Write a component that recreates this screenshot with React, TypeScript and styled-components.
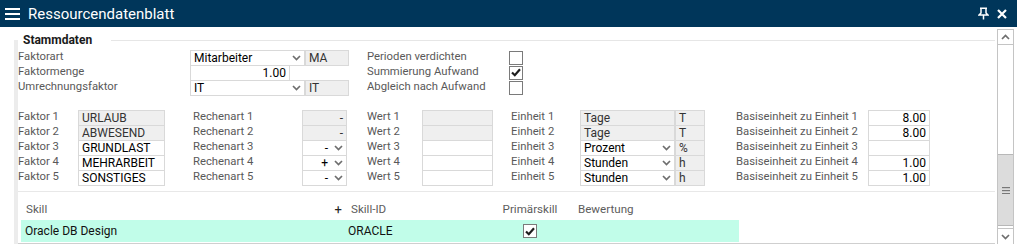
import styled, { createGlobalStyle } from "styled-components";

const GlobalStyle = createGlobalStyle`
  html, body {
    margin: 0;
    padding: 0;
    background: #fff;
  }
  body {
    font-family: Roboto, "Liberation Sans", Arial, sans-serif;
  }
`;

const Window = styled.div`
  width: 1017px;
  height: 244px;
  display: flex;
  flex-direction: column;
  overflow: hidden;
  background: #fff;
`;

const TitleBar = styled.div`
  height: 27px;
  flex: none;
  background: #00365a;
  color: #fff;
  display: flex;
  align-items: center;
  padding: 0 6px 0 5px;
`;

const Title = styled.div`
  flex: 1;
  margin-left: 8px;
  font-size: 15px;
  line-height: 18px;
`;

const TitleIcon = styled.div`
  width: 18px;
  height: 18px;
  display: flex;
  align-items: center;
  justify-content: center;
  margin-left: 1px;
`;

const Body = styled.div`
  flex: 1;
  display: flex;
  min-height: 0;
`;

const Main = styled.div`
  flex: 1;
  display: flex;
  flex-direction: column;
  padding: 13px 2px 0 14px;
  min-width: 0;
`;

const Frame = styled.div`
  flex: 1;
  display: flex;
  flex-direction: column;
  border-left: 4px solid #ececec;
`;

const LegendRow = styled.div`
  display: flex;
  align-items: center;
  height: 12px;
  margin-top: -6px;
`;

const Legend = styled.div`
  width: 88px;
  padding-left: 5px;
  font-size: 12px;
  font-weight: 700;
  color: #1a1a1a;
`;

const LegendLine = styled.div`
  flex: 1;
  border-top: 1px solid #e6e6e6;
`;

const TopGrid = styled.div`
  display: grid;
  grid-template-columns: 172px 115px 44px 160px 14px;
  grid-auto-rows: 15px;
  margin-top: 4px;
`;

const FactorGrid = styled.div`
  display: grid;
  grid-template-columns: 60px 87px 137px 45px 75px 71px 87px 95px 30px 163px 62px;
  grid-auto-rows: 15px;
  margin-top: 15px;
`;

const Label = styled.div<{ $indent?: number }>`
  font-size: 11.3px;
  line-height: 13px;
  color: #595959;
  white-space: nowrap;
  padding-left: ${(p) => p.$indent ?? 0}px;
`;

const Field = styled.div<{ $disabled?: boolean; $width?: number }>`
  box-sizing: border-box;
  height: 16px;
  ${(p) => (p.$width ? `width: ${p.$width}px;` : "")}
  border: 1px solid #d9d9d9;
  background: ${(p) => (p.$disabled ? "#efefef" : "#fff")};
  color: ${(p) => (p.$disabled ? "#333" : "#000")};
  font-size: 12px;
  line-height: 14px;
  padding: 0 3px;
  white-space: nowrap;
  overflow: hidden;
  display: flex;
  align-items: center;
  gap: 6px;
`;

const Value = styled.span<{ $align?: string }>`
  flex: 1;
  text-align: ${(p) => p.$align ?? "left"};
`;

const CheckCell = styled.div`
  display: flex;
  align-items: center;
  justify-content: center;
`;

const Box = styled.span`
  box-sizing: border-box;
  width: 14px;
  height: 14px;
  border: 1px solid #7a7a7a;
  background: #fff;
  display: flex;
  align-items: center;
  justify-content: center;
`;

const Divider = styled.div`
  margin-top: 6px;
  border-top: 1px solid #e8e8e8;
`;

const SkillTable = styled.div`
  margin: 6px 0 0 3px;
  width: 718px;
`;

const SkillRow = styled.div<{ $head?: boolean }>`
  display: grid;
  grid-template-columns: 324px 145px 80px 169px;
  height: 22px;
  align-items: center;
  font-size: ${(p) => (p.$head ? "11.6px" : "12px")};
  color: ${(p) => (p.$head ? "#5c5c5c" : "#111")};
  background: ${(p) => (p.$head ? "transparent" : "#c1fde9")};
`;

const SkillCell = styled.div<{ $pad?: number; $center?: boolean }>`
  padding-left: ${(p) => p.$pad ?? 0}px;
  display: flex;
  align-items: center;
  justify-content: ${(p) => (p.$center ? "center" : "flex-start")};
  white-space: nowrap;
`;

const Plus = styled.span`
  margin-left: auto;
  margin-right: 3px;
  color: #222;
  font-size: 13px;
`;

const BottomLine = styled.div`
  margin-top: auto;
  border-top: 1px solid #cfcfcf;
`;

const Scrollbar = styled.div`
  width: 17px;
  box-sizing: border-box;
  margin: 2px 3px 0 0;
  border-left: 1px solid #c4c4c4;
  border-right: 1px solid #c4c4c4;
  display: flex;
  flex-direction: column;
`;

const ScrollButton = styled.div<{ $top?: boolean }>`
  height: 16px;
  flex: none;
  box-sizing: border-box;
  ${(p) => (p.$top ? "border-top: 1px solid #c4c4c4; border-bottom: 1px solid #c4c4c4;" : "border-top: 1px solid #c4c4c4;")}
  display: flex;
  align-items: center;
  justify-content: center;
`;

const Track = styled.div`
  flex: 1;
  display: flex;
  flex-direction: column;
  padding-top: 109px;
`;

const Thumb = styled.div`
  height: 70px;
  background: #dcdcdc;
  border-top: 1px solid #b8b8b8;
  border-bottom: 1px solid #b8b8b8;
  display: flex;
  align-items: center;
  justify-content: center;
`;

const Chevron = ({ up }: { up?: boolean }) => (
  <svg width="9" height="6" viewBox="0 0 9 6" style={{ flex: "none" }}>
    <polyline
      points={up ? "1,5 4.5,1.5 8,5" : "1,1 4.5,4.5 8,1"}
      fill="none"
      stroke="#6e6e6e"
      strokeWidth="1.7"
    />
  </svg>
);

const Check = () => (
  <svg width="10" height="9" viewBox="0 0 10 9">
    <polyline points="1,4.5 3.8,7.2 9,1.2" fill="none" stroke="#1e1e1e" strokeWidth="2.2" />
  </svg>
);

const Checkbox = ({ checked }: { checked?: boolean }) => (
  <CheckCell>
    <Box>{checked && <Check />}</Box>
  </CheckCell>
);

const Select = ({ value, align, width }: { value: string; align?: string; width?: number }) => (
  <Field $width={width}>
    <Value $align={align}>{value}</Value>
    <Chevron />
  </Field>
);

const factors = [
  { name: "URLAUB", locked: true, op: "-", unit: "Tage", short: "T", base: "8.00" },
  { name: "ABWESEND", locked: true, op: "-", unit: "Tage", short: "T", base: "8.00" },
  { name: "GRUNDLAST", locked: false, op: "-", unit: "Prozent", short: "%", base: "" },
  { name: "MEHRARBEIT", locked: false, op: "+", unit: "Stunden", short: "h", base: "1.00" },
  { name: "SONSTIGES", locked: false, op: "-", unit: "Stunden", short: "h", base: "1.00" },
];

export default function App() {
  return (
    <>
      <GlobalStyle />
      <Window>
        <TitleBar>
          <svg width="15" height="14" viewBox="0 0 15 14">
            <rect x="0" y="1" width="15" height="2" fill="#fff" />
            <rect x="0" y="6" width="15" height="2" fill="#fff" />
            <rect x="0" y="11" width="15" height="2" fill="#fff" />
          </svg>
          <Title>Ressourcendatenblatt</Title>
          <TitleIcon>
            <svg width="11" height="13" viewBox="0 0 11 13">
              <path d="M2 1.2 H9 M3 1.2 V6 L1 8 H10 L8 6 V1.2 M5.5 8 V12.5" fill="none" stroke="#fff" strokeWidth="1.5" />
            </svg>
          </TitleIcon>
          <TitleIcon>
            <svg width="10" height="10" viewBox="0 0 10 10">
              <path d="M1 1 L9 9 M9 1 L1 9" stroke="#fff" strokeWidth="2.2" />
            </svg>
          </TitleIcon>
        </TitleBar>
        <Body>
          <Main>
            <Frame>
              <LegendRow>
                <Legend>Stammdaten</Legend>
                <LegendLine />
              </LegendRow>
              <TopGrid>
                <Label>Faktorart</Label>
                <Select value="Mitarbeiter" />
                <Field $disabled>MA</Field>
                <Label $indent={18}>Perioden verdichten</Label>
                <Checkbox />

                <Label>Faktormenge</Label>
                <Field $width={100}>
                  <Value $align="right">1.00</Value>
                </Field>
                <div />
                <Label $indent={18}>Summierung Aufwand</Label>
                <Checkbox checked />

                <Label>Umrechnungsfaktor</Label>
                <Select value="IT" />
                <Field $disabled>IT</Field>
                <Label $indent={18}>Abgleich nach Aufwand</Label>
                <Checkbox />
              </TopGrid>

              <FactorGrid>
                {factors.map((f, i) => (
                  <>
                    <Label key={`l${i}`}>Faktor {i + 1}</Label>
                    <Field $disabled={f.locked}>{f.name}</Field>
                    <Label $indent={28}>Rechenart {i + 1}</Label>
                    {f.locked ? (
                      <Field $disabled>
                        <Value $align="right">{f.op}</Value>
                      </Field>
                    ) : (
                      <Select value={f.op} align="right" />
                    )}
                    <Label $indent={20}>Wert {i + 1}</Label>
                    <Field $disabled={f.locked} />
                    <Label $indent={18}>Einheit {i + 1}</Label>
                    {f.locked ? <Field $disabled>{f.unit}</Field> : <Select value={f.unit} />}
                    <Field $disabled>{f.short}</Field>
                    <Label $indent={31}>Basiseinheit zu Einheit {i + 1}</Label>
                    <Field>
                      <Value $align="right">{f.base}</Value>
                    </Field>
                  </>
                ))}
              </FactorGrid>

              <Divider />

              <SkillTable>
                <SkillRow $head>
                  <SkillCell $pad={5}>
                    Skill
                    <Plus>+</Plus>
                  </SkillCell>
                  <SkillCell $pad={6}>Skill-ID</SkillCell>
                  <SkillCell $center>Primärskill</SkillCell>
                  <SkillCell $pad={8}>Bewertung</SkillCell>
                </SkillRow>
                <SkillRow>
                  <SkillCell $pad={4}>Oracle DB Design</SkillCell>
                  <SkillCell $pad={3}>ORACLE</SkillCell>
                  <SkillCell $center>
                    <Box>
                      <Check />
                    </Box>
                  </SkillCell>
                  <SkillCell />
                </SkillRow>
              </SkillTable>
              <BottomLine />
            </Frame>
          </Main>
          <Scrollbar>
            <ScrollButton $top>
              <Chevron up />
            </ScrollButton>
            <Track>
              <Thumb>
                <svg width="8" height="7" viewBox="0 0 8 7">
                  <rect x="0" y="0" width="8" height="1.2" fill="#777" />
                  <rect x="0" y="3" width="8" height="1.2" fill="#777" />
                  <rect x="0" y="6" width="8" height="1.2" fill="#777" />
                </svg>
              </Thumb>
            </Track>
            <ScrollButton>
              <Chevron />
            </ScrollButton>
          </Scrollbar>
        </Body>
      </Window>
    </>
  );
}
